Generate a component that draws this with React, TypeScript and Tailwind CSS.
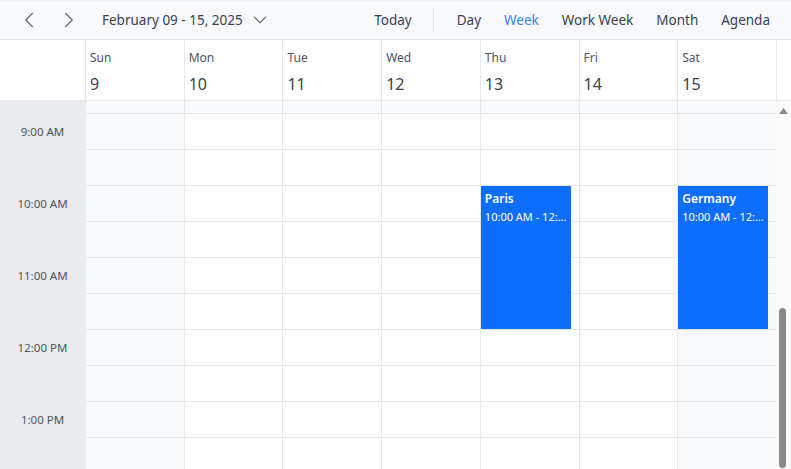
import { ChevronLeft, ChevronRight, ChevronDown } from 'lucide-react';

const days = [
  { name: 'Sun', num: 9, weekend: true },
  { name: 'Mon', num: 10 },
  { name: 'Tue', num: 11 },
  { name: 'Wed', num: 12 },
  { name: 'Thu', num: 13 },
  { name: 'Fri', num: 14 },
  { name: 'Sat', num: 15, weekend: true },
];

const hours = ['9:00 AM', '10:00 AM', '11:00 AM', '12:00 PM', '1:00 PM'];

const events: Record<string, { title: string; time: string }> = {
  Thu: { title: 'Paris', time: '10:00 AM - 12:00 PM' },
  Sat: { title: 'Germany', time: '10:00 AM - 12:00 PM' },
};

const views = ['Day', 'Week', 'Work Week', 'Month', 'Agenda'];

export default function App() {
  return (
    <div
      className="w-[791px] h-[469px] overflow-hidden bg-white text-[#374151] flex flex-col"
      style={{ fontFamily: '"Segoe UI", "Noto Sans", sans-serif' }}
    >
      {/* Toolbar */}
      <div className="h-[40px] shrink-0 flex items-center bg-[#f8f9fa] border-t border-t-[#f1f2f4] border-b border-b-[#e5e7eb]">
        <div className="flex items-center pl-[16px]">
          <ChevronLeft className="w-[26px] h-[26px] text-[#6b7280]" strokeWidth={1.3} />
          <ChevronRight className="w-[26px] h-[26px] text-[#6b7280] ml-[14px]" strokeWidth={1.3} />
        </div>
        <div className="flex items-center ml-[20px] text-[13.5px] text-[#374151]">
          <span>February 09 - 15, 2025</span>
          <ChevronDown className="w-[22px] h-[22px] ml-[6px] text-[#6b7280]" strokeWidth={1.3} />
        </div>
        <div className="ml-auto flex items-center text-[13.5px] pr-[21px]">
          <span>Today</span>
          <div className="w-px h-[24px] bg-[#e5e7eb] ml-[21px] mr-[23px]" />
          <div className="flex items-center gap-[23px]">
            {views.map((v) => (
              <span key={v} className={v === 'Week' ? 'text-[#3b82f6]' : 'text-[#374151]'}>
                {v}
              </span>
            ))}
          </div>
        </div>
      </div>

      {/* Day header */}
      <div className="h-[61px] shrink-0 flex border-b border-[#e5e7eb]">
        <div className="w-[85px] shrink-0" />
        <div className="w-[691px] grid grid-cols-7">
          {days.map((d) => (
            <div key={d.name} className="border-l border-[#e5e7eb] px-[4px] pt-[10px]">
              <div className="text-[12px] text-[#4b5563] leading-[16px]">{d.name}</div>
              <div className="text-[16px] text-[#374151] leading-[20px] mt-[8px]">{d.num}</div>
            </div>
          ))}
        </div>
        <div className="flex-1 border-l border-[#e5e7eb]" />
      </div>

      {/* Body */}
      <div className="flex flex-1 overflow-hidden">
        {/* Time column */}
        <div className="w-[85px] shrink-0 bg-[#e9ebef]">
          <div className="h-[13px]" />
          {hours.map((h) => (
            <div key={h} className="h-[72px]">
              <div className="h-[36px] flex items-center justify-center text-[11.5px] text-[#4b5563]">
                {h}
              </div>
            </div>
          ))}
        </div>

        {/* Grid */}
        <div className="w-[691px] grid grid-cols-7">
          {days.map((d) => (
            <div
              key={d.name}
              className={`relative border-l border-[#e5e7eb] ${d.weekend ? 'bg-[#f8f9fa]' : 'bg-white'}`}
            >
              <div className="h-[13px] border-b border-[#e5e7eb] bg-[#f8f9fa]" />
              {Array.from({ length: 10 }).map((_, i) => (
                <div key={i} className="h-[36px] border-b border-[#e5e7eb]" />
              ))}
              {events[d.name] && (
                <div className="absolute left-0 right-[8px] top-[85px] h-[143px] bg-[#0d6efd] text-white px-[4px] pt-[5px] overflow-hidden">
                  <div className="text-[12px] font-semibold leading-[16px]">{events[d.name].title}</div>
                  <div className="text-[11px] leading-[14px] mt-[3px] whitespace-nowrap overflow-hidden text-ellipsis">
                    {events[d.name].time}
                  </div>
                </div>
              )}
            </div>
          ))}
        </div>

        {/* Scrollbar */}
        <div className="flex-1 relative bg-[#fbfbfc]">
          <svg className="absolute left-[2px] top-[6px]" width="11" height="8" viewBox="0 0 11 8">
            <path d="M5.5 1 L10 7 L1 7 Z" fill="#8a8a8a" />
          </svg>
          <div className="absolute left-[3px] top-[207px] w-[7px] h-[160px] rounded-full bg-[#8b8b8b]" />
        </div>
      </div>
    </div>
  );
}
